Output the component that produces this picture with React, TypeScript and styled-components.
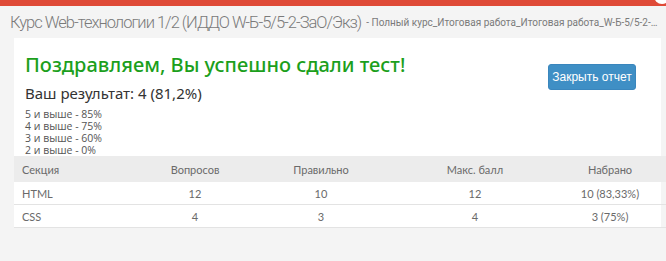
import React from 'react'
import styled, { createGlobalStyle } from 'styled-components';

const Global = createGlobalStyle`
    html, body {
        margin: 0;
        padding: 0;
        background: #f4f4f4;
        font-family: Lato, "Open Sans", sans-serif;
        overflow: hidden;
    }
`;

const TopBar = styled.div`
    position: relative;
    height: 6px;
    background: #df4a37;
`;

const Avatar = styled.div`
    position: absolute;
    right: -4px;
    top: -12px;
    width: 16px;
    height: 16px;
    border-radius: 50%;
    background: #ffffff;
`;

const Crumbs = styled.div`
    height: 32px;
    padding: 0 6px 0 10px;
    display: flex;
    align-items: center;
    white-space: nowrap;
    overflow: hidden;
    color: #7a7a7a;
`;

const CourseName = styled.span`
    flex: none;
    font-family: Roboto, sans-serif;
    font-size: 16.5px;
    font-weight: 300;
    letter-spacing: -1px;
`;

const Sub = styled.span`
    min-width: 0;
    font-family: Roboto, sans-serif;
    font-size: 10px;
    margin-left: 5px;
    overflow: hidden;
    text-overflow: ellipsis;
`;

const Panel = styled.div`
    margin: 0 5px 0 14px;
    background: #ffffff;
`;

const Head = styled.div`
    display: flex;
    justify-content: space-between;
    align-items: flex-start;
    padding: 12px 25px 0 11px;
`;

const Title = styled.h1`
    margin: 0;
    font-family: "Noto Sans", sans-serif;
    font-size: 20px;
    font-weight: 500;
    color: #1c9f1c;
    line-height: 30px;
`;

const Score = styled.div`
    font-family: "Noto Sans", sans-serif;
    font-size: 15px;
    color: #333333;
    margin-top: 2px;
    line-height: 22px;
`;

const Scale = styled.div`
    margin-top: 4px;
    font-family: "Open Sans", sans-serif;
    font-size: 10.5px;
    color: #555555;
    line-height: 12px;
`;

const CloseButton = styled.button`
    margin-top: 14px;
    width: 88px;
    height: 26px;
    border: 1px solid #3a86bd;
    border-radius: 3px;
    background: #3f8fc5;
    color: #ffffff;
    font-family: "Liberation Sans", sans-serif;
    font-size: 12px;
    padding: 0;
`;

const Table = styled.table`
    width: 100%;
    border-collapse: collapse;
    table-layout: fixed;
    font-family: Lato, sans-serif;
    font-size: 11px;
    font-weight: 400;
    color: #6a6a6a;
`;

const Th = styled.th<{ $w: number; $left?: boolean }>`
    width: ${p => p.$w}px;
    height: 26px;
    background: #ececec;
    font-weight: 400;
    text-align: ${p => (p.$left ? 'left' : 'center')};
    padding: 0 0 0 ${p => (p.$left ? '8px' : '0')};
`;

const Td = styled.td<{ $left?: boolean }>`
    height: 22px;
    border-bottom: 1px solid #e3e3e3;
    text-align: ${p => (p.$left ? 'left' : 'center')};
    padding: 0 0 0 ${p => (p.$left ? '8px' : '0')};
`;

const rows = [
    ['HTML', '12', '10', '12', '10 (83,33%)'],
    ['CSS', '4', '3', '4', '3 (75%)'],
];

const cols = [
    { name: 'Секция', w: 125 },
    { name: 'Вопросов', w: 96 },
    { name: 'Правильно', w: 156 },
    { name: 'Макс. балл', w: 152 },
    { name: 'Набрано', w: 118 },
];

const App = () => {
    return (
        <div>
            <Global/>
            <TopBar><Avatar/></TopBar>
            <Crumbs>
                <CourseName>Курс Web-технологии 1/2 (ИДДО W-Б-5/5-2-ЗаО/Экз)</CourseName>
                <Sub>- Полный курс_Итоговая работа_Итоговая работа_W-Б-5/5-2-ЗаО/Экз</Sub>
            </Crumbs>
            <Panel>
                <Head>
                    <div>
                        <Title>Поздравляем, Вы успешно сдали тест!</Title>
                        <Score>Ваш результат: 4 (81,2%)</Score>
                        <Scale>
                            5 и выше - 85%<br/>
                            4 и выше - 75%<br/>
                            3 и выше - 60%<br/>
                            2 и выше - 0%
                        </Scale>
                    </div>
                    <CloseButton>Закрыть отчет</CloseButton>
                </Head>
                <Table>
                    <thead>
                        <tr>
                            {cols.map((c, i) => <Th key={c.name} $w={c.w} $left={i === 0}>{c.name}</Th>)}
                        </tr>
                    </thead>
                    <tbody>
                        {rows.map(r => (
                            <tr key={r[0]}>
                                {r.map((v, i) => <Td key={i} $left={i === 0}>{v}</Td>)}
                            </tr>
                        ))}
                    </tbody>
                </Table>
            </Panel>
        </div>
    );
}

export default App
